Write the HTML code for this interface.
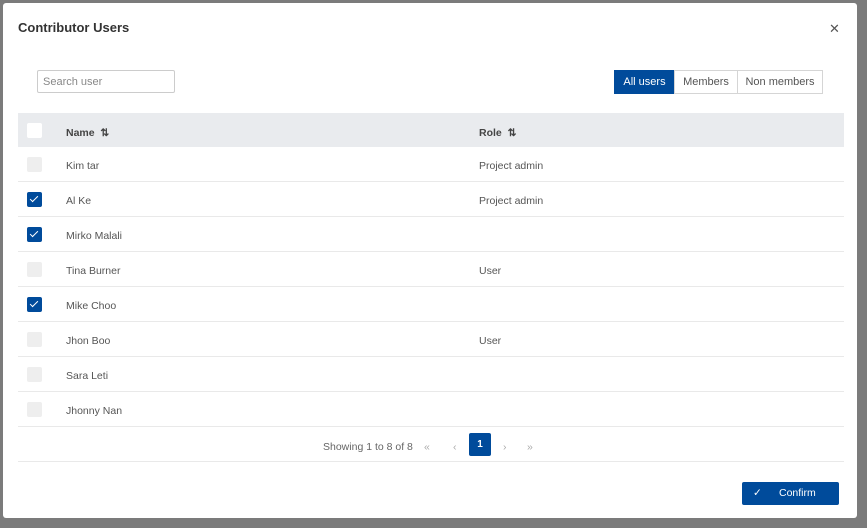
<!DOCTYPE html>
<html><head><style>
*{box-sizing:border-box;margin:0;padding:0}
body{width:867px;height:528px;background:#7b7b7b;font-family:"Liberation Sans",sans-serif;position:relative;overflow:hidden}
.m{position:absolute;left:3px;top:3px;width:854px;height:515px;background:#fff;border-radius:3px}
.t{position:absolute;left:15px;top:17px;font-size:13px;font-weight:bold;color:#333}
.x{position:absolute;left:826px;top:18px;font-size:13px;color:#555}
.s{position:absolute;left:34px;top:67px;width:138px;height:23px;border:1px solid #ccc;border-radius:2px;font-size:11px;color:#888;padding:5px 5px}
.g{position:absolute;left:612px;top:67px;display:flex;height:24px;font-size:11px}
.g div{border:1px solid #d5d5d5;line-height:22px;color:#555;margin-left:-1px;text-align:center}
.g .a{background:#004b9b;color:#fff;border-color:#004b9b}
.tb{position:absolute;left:15px;top:110px;width:826px}
.r{height:35px;border-bottom:1px solid #e9e9e9;position:relative;font-size:10.5px;color:#555}
.h{background:#e9ebee;height:34px;font-weight:bold;color:#444;border:none}
.r span{position:absolute;top:13px}
.h span{top:14px}
.n{left:48px}.o{left:461px}
.cb{position:absolute;left:9px;top:10px;width:15px;height:15px;border-radius:2px;background:#eee}
.h .cb{background:#fff}
.c{background:#004b9b}
.c:after{content:"";position:absolute;left:5px;top:2px;width:3px;height:7px;border:solid #fff;border-width:0 1.3px 1.3px 0;transform:rotate(45deg)}
.p{position:absolute;top:438px;font-size:10.5px;color:#666}
.pg{position:absolute;left:466px;top:430px;width:22px;height:23px;background:#004b9b;color:#fff;border-radius:2px;font-size:10px;text-align:center;line-height:23px;font-weight:bold}
.b{position:absolute;left:739px;top:479px;width:97px;height:23px;background:#004b9b;border-radius:2px;color:#fff;font-size:10.5px;line-height:23px}
</style></head><body>
<div class="m">
<div class="t">Contributor Users</div>
<div class="x">✕</div>
<div class="s">Search user</div>
<div class="g"><div class="a" style="width:61px">All users</div><div style="width:64px">Members</div><div style="width:86px">Non members</div></div>
<div class="tb">
<div class="r h"><div class="cb"></div><span class="n">Name &nbsp;⇅</span><span class="o">Role &nbsp;⇅</span></div>
<div class="r"><div class="cb"></div><span class="n">Kim tar</span><span class="o">Project admin</span></div>
<div class="r"><div class="cb c"></div><span class="n">Al Ke</span><span class="o">Project admin</span></div>
<div class="r"><div class="cb c"></div><span class="n">Mirko Malali</span></div>
<div class="r"><div class="cb"></div><span class="n">Tina Burner</span><span class="o">User</span></div>
<div class="r"><div class="cb c"></div><span class="n">Mike Choo</span></div>
<div class="r"><div class="cb"></div><span class="n">Jhon Boo</span><span class="o">User</span></div>
<div class="r"><div class="cb"></div><span class="n">Sara Leti</span></div>
<div class="r"><div class="cb"></div><span class="n">Jhonny Nan</span></div>
<div class="r" style="height:35px"></div>
</div>
<div class="p" style="left:320px">Showing 1 to 8 of 8</div>
<div class="p" style="left:421px;color:#aaa">«</div>
<div class="p" style="left:450px;color:#aaa">‹</div>
<div class="pg">1</div>
<div class="p" style="left:500px;color:#aaa">›</div>
<div class="p" style="left:524px;color:#aaa">»</div>
<div class="b"><span style="position:absolute;left:11px">✓</span><span style="position:absolute;left:37px">Confirm</span></div>
</div>
</body></html>
